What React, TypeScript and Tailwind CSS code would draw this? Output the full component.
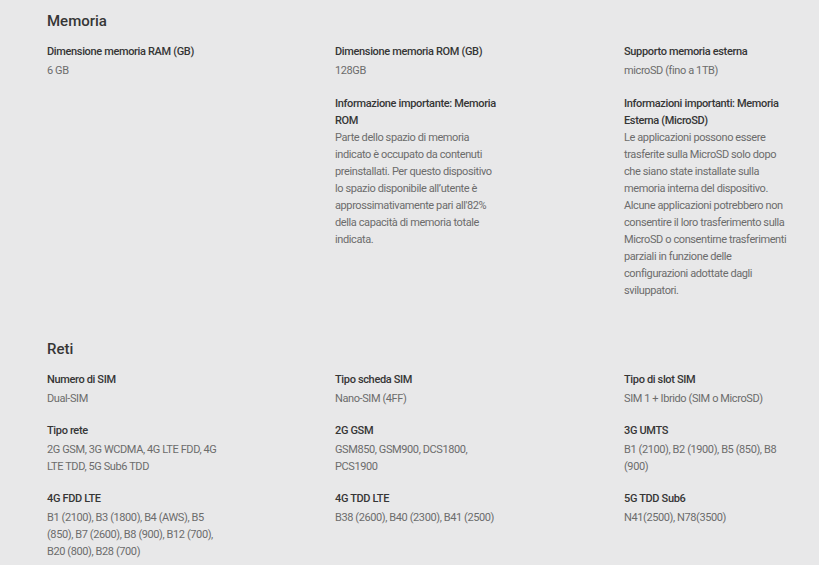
import React from "react";

// lines are kept as in the product page, so the wrapping matches the column width there
type Spec = { label: string[]; value: string[] };

const memoria: Spec[][] = [
  [{ label: ["Dimensione memoria RAM (GB)"], value: ["6 GB"] }],
  [
    { label: ["Dimensione memoria ROM (GB)"], value: ["128GB"] },
    {
      label: ["Informazione importante: Memoria", "ROM"],
      value: [
        "Parte dello spazio di memoria",
        "indicato è occupato da contenuti",
        "preinstallati. Per questo dispositivo",
        "lo spazio disponibile all’utente è",
        "approssimativamente pari all'82%",
        "della capacità di memoria totale",
        "indicata.",
      ],
    },
  ],
  [
    { label: ["Supporto memoria esterna"], value: ["microSD (fino a 1TB)"] },
    {
      label: ["Informazioni importanti: Memoria", "Esterna (MicroSD)"],
      value: [
        "Le applicazioni possono essere",
        "trasferite sulla MicroSD solo dopo",
        "che siano state installate sulla",
        "memoria interna del dispositivo.",
        "Alcune applicazioni potrebbero non",
        "consentire il loro trasferimento sulla",
        "MicroSD o consentirne trasferimenti",
        "parziali in funzione delle",
        "configurazioni adottate dagli",
        "sviluppatori.",
      ],
    },
  ],
];

const reti: Spec[][] = [
  [
    { label: ["Numero di SIM"], value: ["Dual-SIM"] },
    { label: ["Tipo rete"], value: ["2G GSM, 3G WCDMA, 4G LTE FDD, 4G", "LTE TDD, 5G Sub6 TDD"] },
    {
      label: ["4G FDD LTE"],
      value: ["B1 (2100), B3 (1800), B4 (AWS), B5", "(850), B7 (2600), B8 (900), B12 (700),", "B20 (800), B28 (700)"],
    },
  ],
  [
    { label: ["Tipo scheda SIM"], value: ["Nano-SIM (4FF)"] },
    { label: ["2G GSM"], value: ["GSM850, GSM900, DCS1800,", "PCS1900"] },
    { label: ["4G TDD LTE"], value: ["B38 (2600), B40 (2300), B41 (2500)"] },
  ],
  [
    { label: ["Tipo di slot SIM"], value: ["SIM 1 + Ibrido (SIM o MicroSD)"] },
    { label: ["3G UMTS"], value: ["B1 (2100), B2 (1900), B5 (850), B8", "(900)"] },
    { label: ["5G TDD Sub6"], value: ["N41(2500), N78(3500)"] },
  ],
];

const Item = ({ spec, isNote }: { spec: Spec; isNote: boolean }) => (
  <div className="whitespace-nowrap">
    <div className="text-[11px] leading-[17px] font-medium tracking-[-0.35px] text-[#363636]">
      {spec.label.map((l, i) => (
        <div key={i}>{l}</div>
      ))}
    </div>
    <div className={`${isNote ? "" : "mt-[2px]"} text-[11px] leading-[17px] tracking-[-0.4px] text-[#6c6c6c]`}>
      {spec.value.map((l, i) => (
        <div key={i}>{l}</div>
      ))}
    </div>
  </div>
);

const Section = ({ title, cols, notes }: { title: string; cols: Spec[][]; notes?: boolean }) => (
  <section>
    <h2 className="text-[15px] leading-[20px] font-medium text-[#363636] mb-[12px]">{title}</h2>
    <div className="grid grid-cols-[288px_289px_1fr]">
      {cols.map((col, i) => (
        <div key={i} className={`flex flex-col ${notes ? "gap-[16px]" : "gap-[15px]"}`}>
          {col.map((spec, j) => (
            <Item key={j} spec={spec} isNote={!!notes && j > 0} />
          ))}
        </div>
      ))}
    </div>
  </section>
);

export default function App() {
  return (
    <div
      className="min-h-[565px] bg-[#e8e8e9] pl-[47px] pt-[11px] flex flex-col gap-[40px]"
      style={{ fontFamily: "Roboto, 'Liberation Sans', sans-serif" }}
    >
      <Section title="Memoria" cols={memoria} notes />
      <Section title="Reti" cols={reti} />
    </div>
  );
}
